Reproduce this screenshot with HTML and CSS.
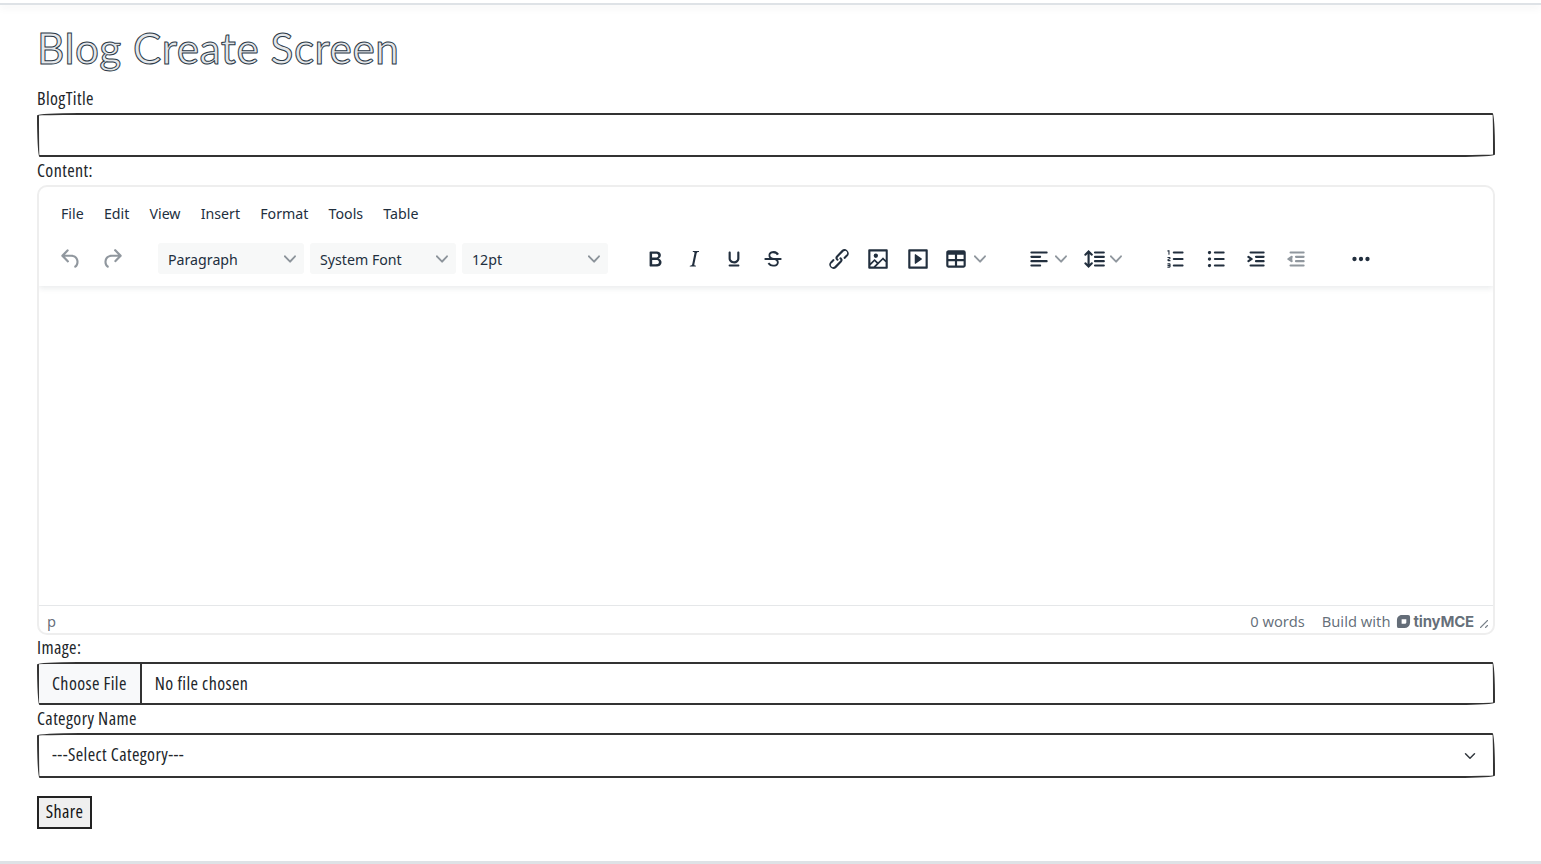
FILE: index.html
```html
<!DOCTYPE html>
<html lang="en">
<head>
  <meta charset="UTF-8">
  <title>Blog Create Screen</title>
  <meta name="viewport" content="width=device-width, initial-scale=1.0">
  <link rel="stylesheet" href="styles.css">
</head>
<body>
  <div class="topbar"></div>
  <main class="page">
    <h1 class="page-title">Blog Create Screen</h1>
    <form class="blog-form">
      <label class="field-label" for="title">BlogTitle</label>
      <input class="sketch-input" type="text" id="title">

      <label class="field-label">Content:</label>
      <div class="editor">
        <div class="editor-header">
          <div class="menubar">
            <span class="menu-item">File</span>
            <span class="menu-item">Edit</span>
            <span class="menu-item">View</span>
            <span class="menu-item">Insert</span>
            <span class="menu-item">Format</span>
            <span class="menu-item">Tools</span>
            <span class="menu-item">Table</span>
          </div>
          <div class="toolbar">
            <div class="tool-group history">
              <span class="tool disabled"><svg class="icon" viewBox="0 0 24 24"><path d="M6.4 8H12c3.7 0 6.2 2 6.8 5.1.6 2.7-.4 5.6-2.3 6.8a1 1 0 0 1-1-1.8c1.1-.6 1.8-2.7 1.4-4.6-.5-2.1-2.1-3.5-4.9-3.5H6.4l3.3 3.3a1 1 0 1 1-1.4 1.4l-5-5a1 1 0 0 1 0-1.4l5-5a1 1 0 0 1 1.4 1.4L6.4 8Z"/></svg></span>
              <span class="tool disabled"><svg class="icon" viewBox="0 0 24 24"><path d="M17.6 10H12c-2.8 0-4.4 1.4-4.9 3.5-.4 2 .3 4 1.4 4.6a1 1 0 1 1-1 1.8c-2-1.2-2.9-4.1-2.3-6.8.6-3 3-5.1 6.8-5.1h5.6l-3.3-3.3a1 1 0 1 1 1.4-1.4l5 5a1 1 0 0 1 0 1.4l-5 5a1 1 0 0 1-1.4-1.4l3.3-3.3Z"/></svg></span>
            </div>
            <div class="tool-group selects">
              <span class="tool-select">Paragraph<svg class="chevron" viewBox="0 0 10 10"><path d="M8.7 2.2c.3-.3.8-.3 1 0 .4.4.4.9 0 1.2L5.7 7.8c-.3.3-.9.3-1.2 0L.2 3.4a.8.8 0 0 1 0-1.2c.3-.3.8-.3 1.1 0L5 6l3.7-3.8Z"/></svg></span>
              <span class="tool-select">System Font<svg class="chevron" viewBox="0 0 10 10"><path d="M8.7 2.2c.3-.3.8-.3 1 0 .4.4.4.9 0 1.2L5.7 7.8c-.3.3-.9.3-1.2 0L.2 3.4a.8.8 0 0 1 0-1.2c.3-.3.8-.3 1.1 0L5 6l3.7-3.8Z"/></svg></span>
              <span class="tool-select">12pt<svg class="chevron" viewBox="0 0 10 10"><path d="M8.7 2.2c.3-.3.8-.3 1 0 .4.4.4.9 0 1.2L5.7 7.8c-.3.3-.9.3-1.2 0L.2 3.4a.8.8 0 0 1 0-1.2c.3-.3.8-.3 1.1 0L5 6l3.7-3.8Z"/></svg></span>
            </div>
            <div class="tool-group formats">
              <span class="tool"><svg class="icon" viewBox="0 0 24 24"><path d="M7.8 19c-.3 0-.5 0-.6-.2l-.2-.5V5.7c0-.2 0-.4.2-.5l.6-.2h5c1.5 0 2.7.3 3.5 1 .7.6 1.1 1.4 1.1 2.5a3 3 0 0 1-.6 1.9c-.4.6-1 1-1.6 1.2.4.1.9.3 1.3.6s.8.7 1 1.2c.4.4.5 1 .5 1.6 0 1.3-.4 2.3-1.3 3-.8.7-2.1 1-3.8 1H7.8Zm5-8.3c.6 0 1.2-.1 1.6-.5.4-.3.6-.7.6-1.3 0-1.1-.8-1.7-2.3-1.7H9.3v3.5h3.4Zm.5 6c.7 0 1.3-.1 1.7-.4.4-.4.6-.9.6-1.5s-.2-1-.7-1.4c-.4-.3-1-.4-2-.4H9.4v3.8h4Z"/></svg></span>
              <span class="tool"><svg class="icon" viewBox="0 0 24 24"><path d="M16.7 4.7l-.1.9h-.3c-.6 0-1 0-1.4.3-.3.3-.4.6-.5 1.1l-2.1 9.8v.6c0 .5.4.8 1.4.8h.2l-.2.8H8l.2-.8h.2c1.1 0 1.8-.5 2-1.5l2-9.8.1-.5c0-.6-.4-.8-1.4-.8h-.3l.2-.9h5.8Z"/></svg></span>
              <span class="tool"><svg class="icon" viewBox="0 0 24 24"><path d="M16 5c.6 0 1 .4 1 1v5.5a4 4 0 0 1-.4 1.8l-1 1.4a5.3 5.3 0 0 1-5.5 1 5 5 0 0 1-1.6-1c-.5-.4-.8-.9-1.1-1.4a4 4 0 0 1-.4-1.8V6c0-.6.4-1 1-1s1 .4 1 1v5.5c0 .3 0 .6.2 1l.6.7a3.3 3.3 0 0 0 2.2.8 3.4 3.4 0 0 0 2.2-.8c.3-.2.4-.5.6-.8l.2-.9V6c0-.6.4-1 1-1ZM8 17h8c.6 0 1 .4 1 1s-.4 1-1 1H8a1 1 0 0 1 0-2Z"/></svg></span>
              <span class="tool"><svg class="icon" viewBox="0 0 24 24"><path d="M15.6 8.5c-.5-.7-1-1.1-1.3-1.3-.6-.4-1.3-.6-2-.6-2.7 0-2.8 1.7-2.8 2.1 0 1.6 1.8 2 3.2 2.3 4.4.9 4.6 2.8 4.6 3.9 0 1.4-.7 4.1-5 4.1A6.2 6.2 0 0 1 7 16.4l1.5-1.1c.4.6 1.6 2 3.7 2 1.6 0 2.5-.4 3-1 .3-.4.4-.9.4-1.3 0-1.6-1.8-2-3.1-2.3-4.5-.9-4.6-2.8-4.6-3.9 0-1.4.6-4.1 4.8-4.1 1.2 0 2.3.3 3.3 1 .6.4 1 .9 1.5 1.6l-1.4.9Z"/><path d="M5 11h14a1 1 0 0 1 0 2H5a1 1 0 0 1 0-2Z"/></svg></span>
            </div>
            <div class="tool-group inserts">
              <span class="tool"><svg class="icon" viewBox="0 0 24 24"><path d="M6.2 12.3a1 1 0 0 1 1.4 1.4l-2 2a2 2 0 1 0 2.6 2.8l4.8-4.8a1 1 0 0 0 0-1.4 1 1 0 1 1 1.4-1.3 2.9 2.9 0 0 1 0 4L9.6 20a3.9 3.9 0 0 1-5.5-5.5l2-2Zm11.6-.6a1 1 0 0 1-1.4-1.4l2-2a2 2 0 1 0-2.6-2.8L11 10.3a1 1 0 0 0 0 1.4A1 1 0 1 1 9.6 13a2.9 2.9 0 0 1 0-4L14.4 4a3.9 3.9 0 0 1 5.5 5.5l-2 2Z"/></svg></span>
              <span class="tool"><svg class="icon" viewBox="0 0 24 24"><path fill-rule="evenodd" d="m5 15.7 3.3-3.2c.3-.3.7-.3 1 0L12 15l4.1-4c.3-.4.8-.4 1 0l2 1.9V5H5v10.7ZM5 18v1h3l2.8-2.9-2-2L5 18Zm14-3-2.5-2.4-6.4 6.5H19v-4ZM4 3h16c.6 0 1 .4 1 1v16c0 .6-.4 1-1 1H4a1 1 0 0 1-1-1V4c0-.6.4-1 1-1Zm6 8a2 2 0 1 0 0-4 2 2 0 0 0 0 4Z"/></svg></span>
              <span class="tool"><svg class="icon" viewBox="0 0 24 24"><path fill-rule="evenodd" d="M4 3h16c.6 0 1 .4 1 1v16c0 .6-.4 1-1 1H4a1 1 0 0 1-1-1V4c0-.6.4-1 1-1Zm1 2v14h14V5H5Zm4.8 2.6 5.6 4a.5.5 0 0 1 0 .8l-5.6 4A.5.5 0 0 1 9 16V8a.5.5 0 0 1 .8-.4Z"/></svg></span>
              <span class="tool split table-tool"><svg class="icon" viewBox="0 0 24 24"><path fill-rule="evenodd" d="M19 4a2 2 0 0 1 2 2v12a2 2 0 0 1-2 2H5a2 2 0 0 1-2-2V6c0-1.1.9-2 2-2h14Zm0 10h-6v4h6v-4Zm-8 0H5v4h6v-4Zm8-6h-6v4h6V8Zm-8 0H5v4h6V8Z"/></svg><svg class="chevron" viewBox="0 0 10 10"><path d="M8.7 2.2c.3-.3.8-.3 1 0 .4.4.4.9 0 1.2L5.7 7.8c-.3.3-.9.3-1.2 0L.2 3.4a.8.8 0 0 1 0-1.2c.3-.3.8-.3 1.1 0L5 6l3.7-3.8Z"/></svg></span>
            </div>
            <div class="tool-group aligns">
              <span class="tool split"><svg class="icon" viewBox="0 0 24 24"><path d="M5 5h14c.6 0 1 .4 1 1s-.4 1-1 1H5a1 1 0 1 1 0-2Zm0 4h8c.6 0 1 .4 1 1s-.4 1-1 1H5a1 1 0 1 1 0-2Zm0 8h8c.6 0 1 .4 1 1s-.4 1-1 1H5a1 1 0 0 1 0-2Zm0-4h14c.6 0 1 .4 1 1s-.4 1-1 1H5a1 1 0 0 1 0-2Z"/></svg><svg class="chevron" viewBox="0 0 10 10"><path d="M8.7 2.2c.3-.3.8-.3 1 0 .4.4.4.9 0 1.2L5.7 7.8c-.3.3-.9.3-1.2 0L.2 3.4a.8.8 0 0 1 0-1.2c.3-.3.8-.3 1.1 0L5 6l3.7-3.8Z"/></svg></span>
              <span class="tool split"><svg class="icon" viewBox="0 0 24 24"><path d="M21 5a1 1 0 0 1 .1 2H13a1 1 0 0 1-.1-2H21zm0 4a1 1 0 0 1 .1 2H13a1 1 0 0 1-.1-2H21zm0 4a1 1 0 0 1 .1 2H13a1 1 0 0 1-.1-2H21zm0 4a1 1 0 0 1 .1 2H13a1 1 0 0 1-.1-2H21zM7 3.6l3.7 3.7a1 1 0 0 1-1.3 1.5h-.1L8 7.3v9.2l1.3-1.3a1 1 0 0 1 1.3 0h.1c.4.4.4 1 0 1.3v.1L7 20.4l-3.7-3.7a1 1 0 0 1 1.3-1.5h.1L6 16.7V7.4L4.7 8.7a1 1 0 0 1-1.3 0h-.1a1 1 0 0 1 0-1.3v-.1L7 3.6z"/></svg><svg class="chevron" viewBox="0 0 10 10"><path d="M8.7 2.2c.3-.3.8-.3 1 0 .4.4.4.9 0 1.2L5.7 7.8c-.3.3-.9.3-1.2 0L.2 3.4a.8.8 0 0 1 0-1.2c.3-.3.8-.3 1.1 0L5 6l3.7-3.8Z"/></svg></span>
            </div>
            <div class="tool-group lists">
              <span class="tool"><svg class="icon" viewBox="0 0 24 24"><path d="M10 17h8c.6 0 1 .4 1 1s-.4 1-1 1h-8a1 1 0 0 1 0-2Zm0-6h8c.6 0 1 .4 1 1s-.4 1-1 1h-8a1 1 0 0 1 0-2Zm0-6h8c.6 0 1 .4 1 1s-.4 1-1 1h-8a1 1 0 1 1 0-2ZM6 4v3.5c0 .3-.2.5-.5.5a.5.5 0 0 1-.5-.5V5h-.5a.5.5 0 0 1 0-1H6Zm-1 8.8.2.2h1.3c.3 0 .5.2.5.5s-.2.5-.5.5H4.9a1 1 0 0 1-.9-1V13c0-.4.3-.8.6-1l1.2-.4.2-.3a.2.2 0 0 0-.2-.2H4.5a.5.5 0 0 1-.5-.5c0-.3.2-.5.5-.5h1.6c.5 0 .9.4.9 1v.1c0 .4-.3.8-.6 1l-1.2.4-.2.3ZM7 17v2c0 .6-.4 1-1 1H4.5a.5.5 0 0 1 0-1h1.2c.2 0 .3-.1.3-.3 0-.2-.1-.3-.3-.3H4.4a.4.4 0 1 1 0-.8h1.3c.2 0 .3-.1.3-.3 0-.2-.1-.3-.3-.3H4.5a.5.5 0 1 1 0-1H6c.6 0 1 .4 1 1Z"/></svg></span>
              <span class="tool"><svg class="icon" viewBox="0 0 24 24"><path d="M11 5h8c.6 0 1 .4 1 1s-.4 1-1 1h-8a1 1 0 0 1 0-2Zm0 6h8c.6 0 1 .4 1 1s-.4 1-1 1h-8a1 1 0 0 1 0-2Zm0 6h8c.6 0 1 .4 1 1s-.4 1-1 1h-8a1 1 0 0 1 0-2ZM4.500 6c0-.4.1-.8.4-1 .3-.4.7-.5 1.100-.5s.8.1 1 .4c.4.3.5.7.5 1.100s-.1.8-.4 1c-.3.4-.7.5-1.100.5s-.8-.1-1-.4c-.4-.3-.5-.7-.5-1.100Zm0 6c0-.4.1-.8.4-1 .3-.4.7-.5 1.100-.5s.8.1 1 .4c.4.3.5.7.5 1.100s-.1.8-.4 1c-.3.4-.7.5-1.100.5s-.8-.1-1-.4c-.4-.3-.5-.7-.5-1.100Zm0 6c0-.4.1-.8.4-1 .3-.4.7-.5 1.100-.5s.8.1 1 .4c.4.3.5.7.5 1.100s-.1.8-.4 1c-.3.4-.7.5-1.100.5s-.8-.1-1-.4c-.4-.3-.5-.7-.5-1.100Z"/></svg></span>
              <span class="tool"><svg class="icon" viewBox="0 0 24 24"><path d="M7 5h12c.6 0 1 .4 1 1s-.4 1-1 1H7a1 1 0 1 1 0-2Zm5 4h7c.6 0 1 .4 1 1s-.4 1-1 1h-7a1 1 0 0 1 0-2Zm0 4h7c.6 0 1 .4 1 1s-.4 1-1 1h-7a1 1 0 0 1 0-2Zm-5 4h12a1 1 0 0 1 0 2H7a1 1 0 0 1 0-2Zm-2.600-3.800L6.200 12l-1.800-1.200a1 1 0 0 1 1.200-1.600l3 2a1 1 0 0 1 0 1.600l-3 2a1 1 0 1 1-1.200-1.600Z"/></svg></span>
              <span class="tool disabled"><svg class="icon" viewBox="0 0 24 24"><path d="M7 5h12c.6 0 1 .4 1 1s-.4 1-1 1H7a1 1 0 1 1 0-2Zm5 4h7c.6 0 1 .4 1 1s-.4 1-1 1h-7a1 1 0 0 1 0-2Zm0 4h7c.6 0 1 .4 1 1s-.4 1-1 1h-7a1 1 0 0 1 0-2Zm-5 4h12a1 1 0 0 1 0 2H7a1 1 0 0 1 0-2Zm1.600-3.800L6.800 12l1.800 1.200a1 1 0 0 1-1.200 1.600l-3-2a1 1 0 0 1 0-1.600l3-2a1 1 0 1 1 1.200 1.600Z"/></svg></span>
            </div>
            <div class="tool-group more">
              <span class="tool"><svg class="icon" viewBox="0 0 24 24"><path d="M6 10a2 2 0 0 0-2 2c0 1.100.9 2 2 2a2 2 0 0 0 2-2 2 2 0 0 0-2-2Zm12 0a2 2 0 0 0-2 2c0 1.100.9 2 2 2a2 2 0 0 0 2-2 2 2 0 0 0-2-2Zm-6 0a2 2 0 0 0-2 2c0 1.100.9 2 2 2a2 2 0 0 0 2-2 2 2 0 0 0-2-2Z"/></svg></span>
            </div>
          </div>
        </div>
        <div class="editor-body"></div>
        <div class="statusbar">
          <span class="status-path">p</span>
          <span class="status-words">0 words</span>
          <span class="status-brand">Build with
            <svg class="brand-logo" viewBox="0 0 16 16"><path fill-rule="evenodd" d="M5 1h8a2 2 0 0 1 2 2v6a6 6 0 0 1-6 6H3a2 2 0 0 1-2-2V7a6 6 0 0 1 4-6Zm1 4.500v5h3.500a1.500 1.500 0 0 0 1.500-1.500V5.500Z"/></svg>
            <b class="brand-name">tinyMCE</b>
          </span>
          <svg class="resize-handle" viewBox="0 0 10 10"><path d="M8.100 1.100a.500.500 0 1 1 .800.800l-7 7a.500.500 0 0 1-.800-.800l7-7Zm0 5a.500.500 0 1 1 .800.800l-2 2a.500.500 0 0 1-.800-.800l2-2Z"/></svg>
        </div>
      </div>

      <label class="field-label" for="image">Image:</label>
      <input class="sketch-input file-input" type="file" id="image">

      <label class="field-label" for="category">Category Name</label>
      <select class="sketch-input category-select" id="category">
        <option>---Select Category---</option>
      </select>

      <button class="share-btn" type="button">Share</button>
    </form>
  </main>
  <div class="bottom-line"></div>
</body>
</html>
```

FILE: styles.css
```css
* {
  box-sizing: border-box;
}
html, body {
  height: 100%;
}
body {
  margin: 0;
  background: #fff;
  color: #212529;
  font-family: "Open Sans", "Liberation Sans", sans-serif;
  font-stretch: 75%;
  display: flex;
  flex-direction: column;
  overflow: hidden;
}
.topbar {
  height: 5px;
  background: #fff;
  border-bottom: 2px solid #dee2e6;
  box-shadow: 0 3px 8px rgba(0, 0, 0, 0.05);
}
.page {
  flex: 1;
  padding: 0 46px 0 37px;
}
.page-title {
  margin: 21px 0 0;
  height: 43px;
  font-family: "Lato", sans-serif;
  font-stretch: normal;
  font-size: 42.300px;
  line-height: 43px;
  font-weight: 400;
  letter-spacing: 0.5px;
  color: #e4e7ea;
  -webkit-text-stroke: 1px #2d3a48;
}
.blog-form {
  display: flex;
  flex-direction: column;
  align-items: stretch;
  margin-top: 16px;
}
.field-label {
  display: block;
  height: 28px;
  font-size: 18px;
  line-height: 27px;
  font-weight: 500;
  letter-spacing: 0.4px;
  color: #212529;
}
.sketch-input {
  display: block;
  width: 100%;
  height: 44px;
  padding: 4px 13px 8px;
  border: 2px solid #333;
  border-radius: 255px 15px 225px 15px / 15px 225px 15px 255px;
  background-color: #fff;
  color: #212529;
  font-family: inherit;
  font-stretch: 75%;
  font-size: 18px;
  letter-spacing: 0.4px;
  outline: none;
}
.file-input {
  height: 43px;
  padding: 7px 13px 8px;
  line-height: 24px;
  overflow: hidden;
}
.file-input::file-selector-button {
  height: 43px;
  margin: -10px 13px -10px -13px;
  padding: 4px 13px 6px;
  border: 0;
  border-right: 2px solid #333;
  background: #f8f9fa;
  color: #212529;
  font: inherit;
  letter-spacing: inherit;
}
.category-select {
  height: 45px;
  appearance: none;
  -webkit-appearance: none;
  padding-right: 36px;
  background-image: url("data:image/svg+xml,%3csvg xmlns='http://www.w3.org/2000/svg' viewBox='0 0 16 16'%3e%3cpath fill='none' stroke='%23343a40' stroke-linecap='round' stroke-linejoin='round' stroke-width='2' d='m2 5 6 6 6-6'/%3e%3c/svg%3e");
  background-repeat: no-repeat;
  background-position: right 15px center;
  background-size: 16px 12px;
}
.share-btn {
  align-self: flex-start;
  width: 55px;
  height: 33px;
  margin-top: 18px;
  padding: 0 0 3px;
  border: 2px solid #222;
  background: #efefef;
  color: #111;
  font-family: inherit;
  font-stretch: 75%;
  font-size: 18px;
  letter-spacing: 0.4px;
}
.bottom-line {
  height: 3px;
  background: #dee2e6;
}

/* editor */
.editor {
  height: 450px;
  margin-bottom: -1px;
  display: flex;
  flex-direction: column;
  border: 2px solid #eee;
  border-radius: 10px;
  overflow: hidden;
  font-family: "Noto Sans", "Open Sans", sans-serif;
  font-stretch: normal;
  color: #222f3e;
}
.editor-header {
  height: 99px;
  padding: 0 0 0 5px;
  box-shadow: 0 2px 6px rgba(34, 47, 62, 0.1);
  position: relative;
}
.menubar {
  display: flex;
  height: 56px;
  padding: 10px 0 0 17px;
  gap: 20.200px;
  font-size: 14.200px;
  line-height: 34px;
}
.toolbar {
  display: flex;
  align-items: center;
  height: 31px;
}
.tool-group {
  display: flex;
  align-items: center;
}
.history {
  margin-left: 10px;
  gap: 7px;
  width: 104px;
}
.selects {
  gap: 6px;
}
.formats {
  margin-left: 30px;
  gap: 5.300px;
}
.inserts {
  margin-left: 32px;
  gap: 5.500px;
}
.aligns {
  margin-left: 30px;
  gap: 2px;
}
.lists {
  margin-left: 28px;
  gap: 6px;
}
.more {
  margin-left: 31px;
}
.tool {
  display: flex;
  align-items: center;
  justify-content: center;
  width: 34px;
  height: 31px;
  color: #222f3e;
}
.tool.disabled {
  color: rgba(34, 47, 62, 0.5);
}
.tool.split {
  justify-content: flex-start;
  width: 53px;
  padding-left: 3px;
  gap: 3px;
}
.tool.table-tool {
  padding-left: 3px;
  gap: 5px;
}
.icon {
  flex: none;
  width: 26px;
  height: 26px;
  fill: currentColor;
}
.chevron {
  width: 12px;
  height: 12px;
  fill: rgba(34, 47, 62, 0.5);
  flex: none;
}
.tool-select {
  display: flex;
  align-items: center;
  justify-content: space-between;
  width: 146px;
  height: 31px;
  padding: 1px 8px 0 10px;
  border-radius: 3px;
  background: #f7f8f8;
  font-size: 14.200px;
}
.editor-body {
  flex: 1;
  background: #fff;
}
.statusbar {
  display: flex;
  align-items: center;
  height: 28px;
  padding: 3px 4px 0 8px;
  border-top: 1px solid #e5e7e9;
  font-size: 14.700px;
  color: rgba(34, 47, 62, 0.7);
}
.status-path {
  flex: 1;
}
.status-brand {
  display: flex;
  align-items: center;
  gap: 5px;
  margin-left: 17px;
}
.brand-logo {
  width: 15px;
  height: 15px;
  fill: rgba(34, 47, 62, 0.7);
}
.brand-name {
  margin-left: -2px;
  font-family: "Inter", sans-serif;
  font-size: 15px;
  font-weight: 700;
  letter-spacing: -0.2px;
}
.resize-handle {
  width: 10px;
  height: 10px;
  margin-left: 5px;
  margin-top: 5px;
  fill: rgba(34, 47, 62, 0.6);
}
```
